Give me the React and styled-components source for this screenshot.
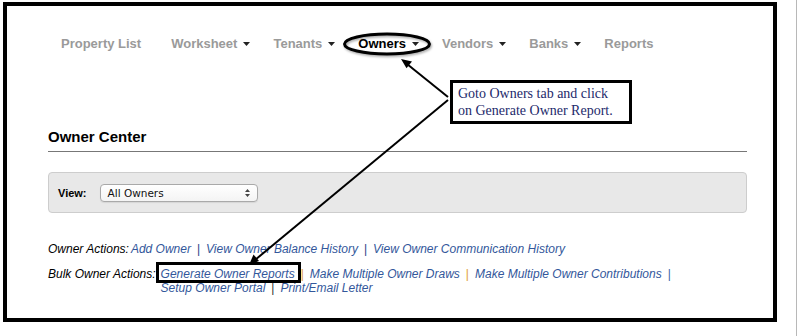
import React from "react";
import styled, { createGlobalStyle } from "styled-components";

const Global = createGlobalStyle`
  body {
    margin: 0;
    background: #fff;
    font-family: "Liberation Sans", Arial, sans-serif;
  }
`;

const Page = styled.div`
  width: 797px;
  height: 336px;
  box-sizing: border-box;
  border-right: 1px solid #b8b8b8;
  padding: 2px 0 0 3px;
`;

const Frame = styled.div`
  position: relative;
  width: 774px;
  height: 320px;
  box-sizing: border-box;
  border: 4px solid #000;
  padding: 27px 26px 0 41px;
`;

const Nav = styled.nav`
  display: flex;
  align-items: center;
  gap: 23px;
  height: 20px;
  padding-left: 13px;
`;

const NavItem = styled.span`
  display: inline-flex;
  align-items: center;
  font-size: 13px;
  font-weight: bold;
  color: ${(p) => (p.$active ? "#000" : "#9a9a9a")};
  margin-right: ${(p) => p.$extra || 0}px;
  white-space: nowrap;
`;

const Caret = styled.svg`
  margin-left: 6px;
  margin-top: 1px;
`;

const Heading = styled.h2`
  margin: 75px 0 0;
  height: 18px;
  line-height: 18px;
  padding-bottom: 5px;
  border-bottom: 1px solid #777;
  font-size: 15px;
  font-weight: bold;
  color: #000;
`;

const ViewBar = styled.div`
  display: flex;
  align-items: center;
  gap: 13px;
  margin-top: 20px;
  height: 41px;
  box-sizing: border-box;
  padding: 0 9px;
  background: #e8e8e8;
  border: 1px solid #cdcdcd;
  border-radius: 4px;
`;

const ViewLabel = styled.span`
  font-size: 11px;
  font-weight: bold;
  color: #000;
`;

const Select = styled.div`
  display: flex;
  align-items: center;
  justify-content: space-between;
  width: 158px;
  height: 18px;
  box-sizing: border-box;
  padding: 0 7px;
  background: linear-gradient(#ffffff, #f4f4f4);
  border: 1px solid #a9a9a9;
  border-radius: 4px;
  box-shadow: 0 1px 1px rgba(0, 0, 0, 0.08);
  font-family: "DejaVu Sans", sans-serif;
  font-size: 10.5px;
  color: #111;
`;

const Actions = styled.div`
  margin-top: 29px;
  font-size: 12px;
  font-style: italic;
  line-height: 14px;
  color: #000;
`;

const ActionRow = styled.div`
  display: flex;
  margin-bottom: ${(p) => p.$gap || 0}px;
`;

const Label = styled.span`
  white-space: nowrap;
  margin-right: ${(p) => p.$space}px;
`;

const Links = styled.div`
  width: ${(p) => p.$width || "auto"};
`;

const Link = styled.a`
  color: #33579b;
  text-decoration: none;
  white-space: nowrap;
  position: relative;
  ${(p) =>
    p.$boxed &&
    `
    &::after {
      content: "";
      position: absolute;
      left: -5px;
      right: -6px;
      top: -5px;
      bottom: -2px;
      border: 3px solid #000;
    }
  `}
`;

const Sep = styled.span`
  font-style: normal;
  padding: 0 6px;
  color: ${(p) => p.$color};
`;

const Callout = styled.div`
  position: absolute;
  left: 443px;
  top: 74px;
  width: 182px;
  height: 44px;
  box-sizing: border-box;
  border: 3px solid #000;
  background: #fff;
  padding: 2px 0 0 5px;
  font-family: "Liberation Serif", "Times New Roman", serif;
  font-size: 14px;
  line-height: 17px;
  color: #1d2a6b;
  white-space: nowrap;
`;

const Overlay = styled.svg`
  position: absolute;
  left: -7px;
  top: -6px;
  pointer-events: none;
`;

const DownCaret = () => (
  <Caret width="7" height="4" viewBox="0 0 7 4">
    <path d="M0 0h7L3.5 4z" fill="#222" />
  </Caret>
);

const navItems = [
  { label: "Property List", extra: 7 },
  { label: "Worksheet", caret: true },
  { label: "Tenants", caret: true },
  { label: "Owners", caret: true, active: true },
  { label: "Vendors", caret: true },
  { label: "Banks", caret: true },
  { label: "Reports" },
];

export default function App() {
  return (
    <>
      <Global />
      <Page>
        <Frame>
          <Nav>
            {navItems.map((n) => (
              <NavItem key={n.label} $active={n.active} $extra={n.extra}>
                {n.label}
                {n.caret && <DownCaret />}
              </NavItem>
            ))}
          </Nav>

          <Heading>Owner Center</Heading>

          <ViewBar>
            <ViewLabel>View:</ViewLabel>
            <Select>
              <span>All Owners</span>
              <svg width="5" height="8" viewBox="0 0 5 8">
                <path d="M0 3h5L2.5 0zM0 5h5L2.5 8z" fill="#444" />
              </svg>
            </Select>
          </ViewBar>

          <Actions>
            <ActionRow $gap={11}>
              <Label $space={2}>Owner Actions: </Label>
              <Links>
                <Link>Add Owner</Link>
                <Sep $color="#2c3e86">|</Sep>
                <Link>View Owner Balance History</Link>
                <Sep $color="#2c3e86">|</Sep>
                <Link>View Owner Communication History</Link>
              </Links>
            </ActionRow>
            <ActionRow>
              <Label $space={5}>Bulk Owner Actions:</Label>
              <Links $width="530px">
                <Link $boxed>Generate Owner Reports</Link>
                <Sep $color="#e0a030">|</Sep>
                <wbr />
                <Link>Make Multiple Owner Draws</Link>
                <Sep $color="#e0a030">|</Sep>
                <wbr />
                <Link>Make Multiple Owner Contributions</Link>
                <Sep $color="#3a5fa8">|</Sep>
                <wbr />
                <Link>Setup Owner Portal</Link>
                <Sep $color="#333">|</Sep>
                <wbr />
                <Link>Print/Email Letter</Link>
              </Links>
            </ActionRow>
          </Actions>

          <Callout>
            Goto Owners tab and click
            <br />
            on Generate Owner Report.
          </Callout>

          <Overlay width="798" height="336" viewBox="0 0 798 336">
            <defs>
              <filter id="sh" x="-20%" y="-50%" width="140%" height="200%">
                <feDropShadow dx="1" dy="1.5" stdDeviation="1" floodColor="#000" floodOpacity="0.35" />
              </filter>
            </defs>
            <ellipse cx="387" cy="44" rx="42.5" ry="10" fill="none" stroke="#000" strokeWidth="3" filter="url(#sh)" />
            <line x1="448" y1="97" x2="407" y2="64" stroke="#000" strokeWidth="2" />
            <path d="M401 59l11 2.5-5.5 6.8z" fill="#000" />
            <line x1="448" y1="100" x2="255" y2="260" stroke="#000" strokeWidth="2" />
            <path d="M249 265l4.5-10.5 5.5 6.6z" fill="#000" />
          </Overlay>
        </Frame>
      </Page>
    </>
  );
}
